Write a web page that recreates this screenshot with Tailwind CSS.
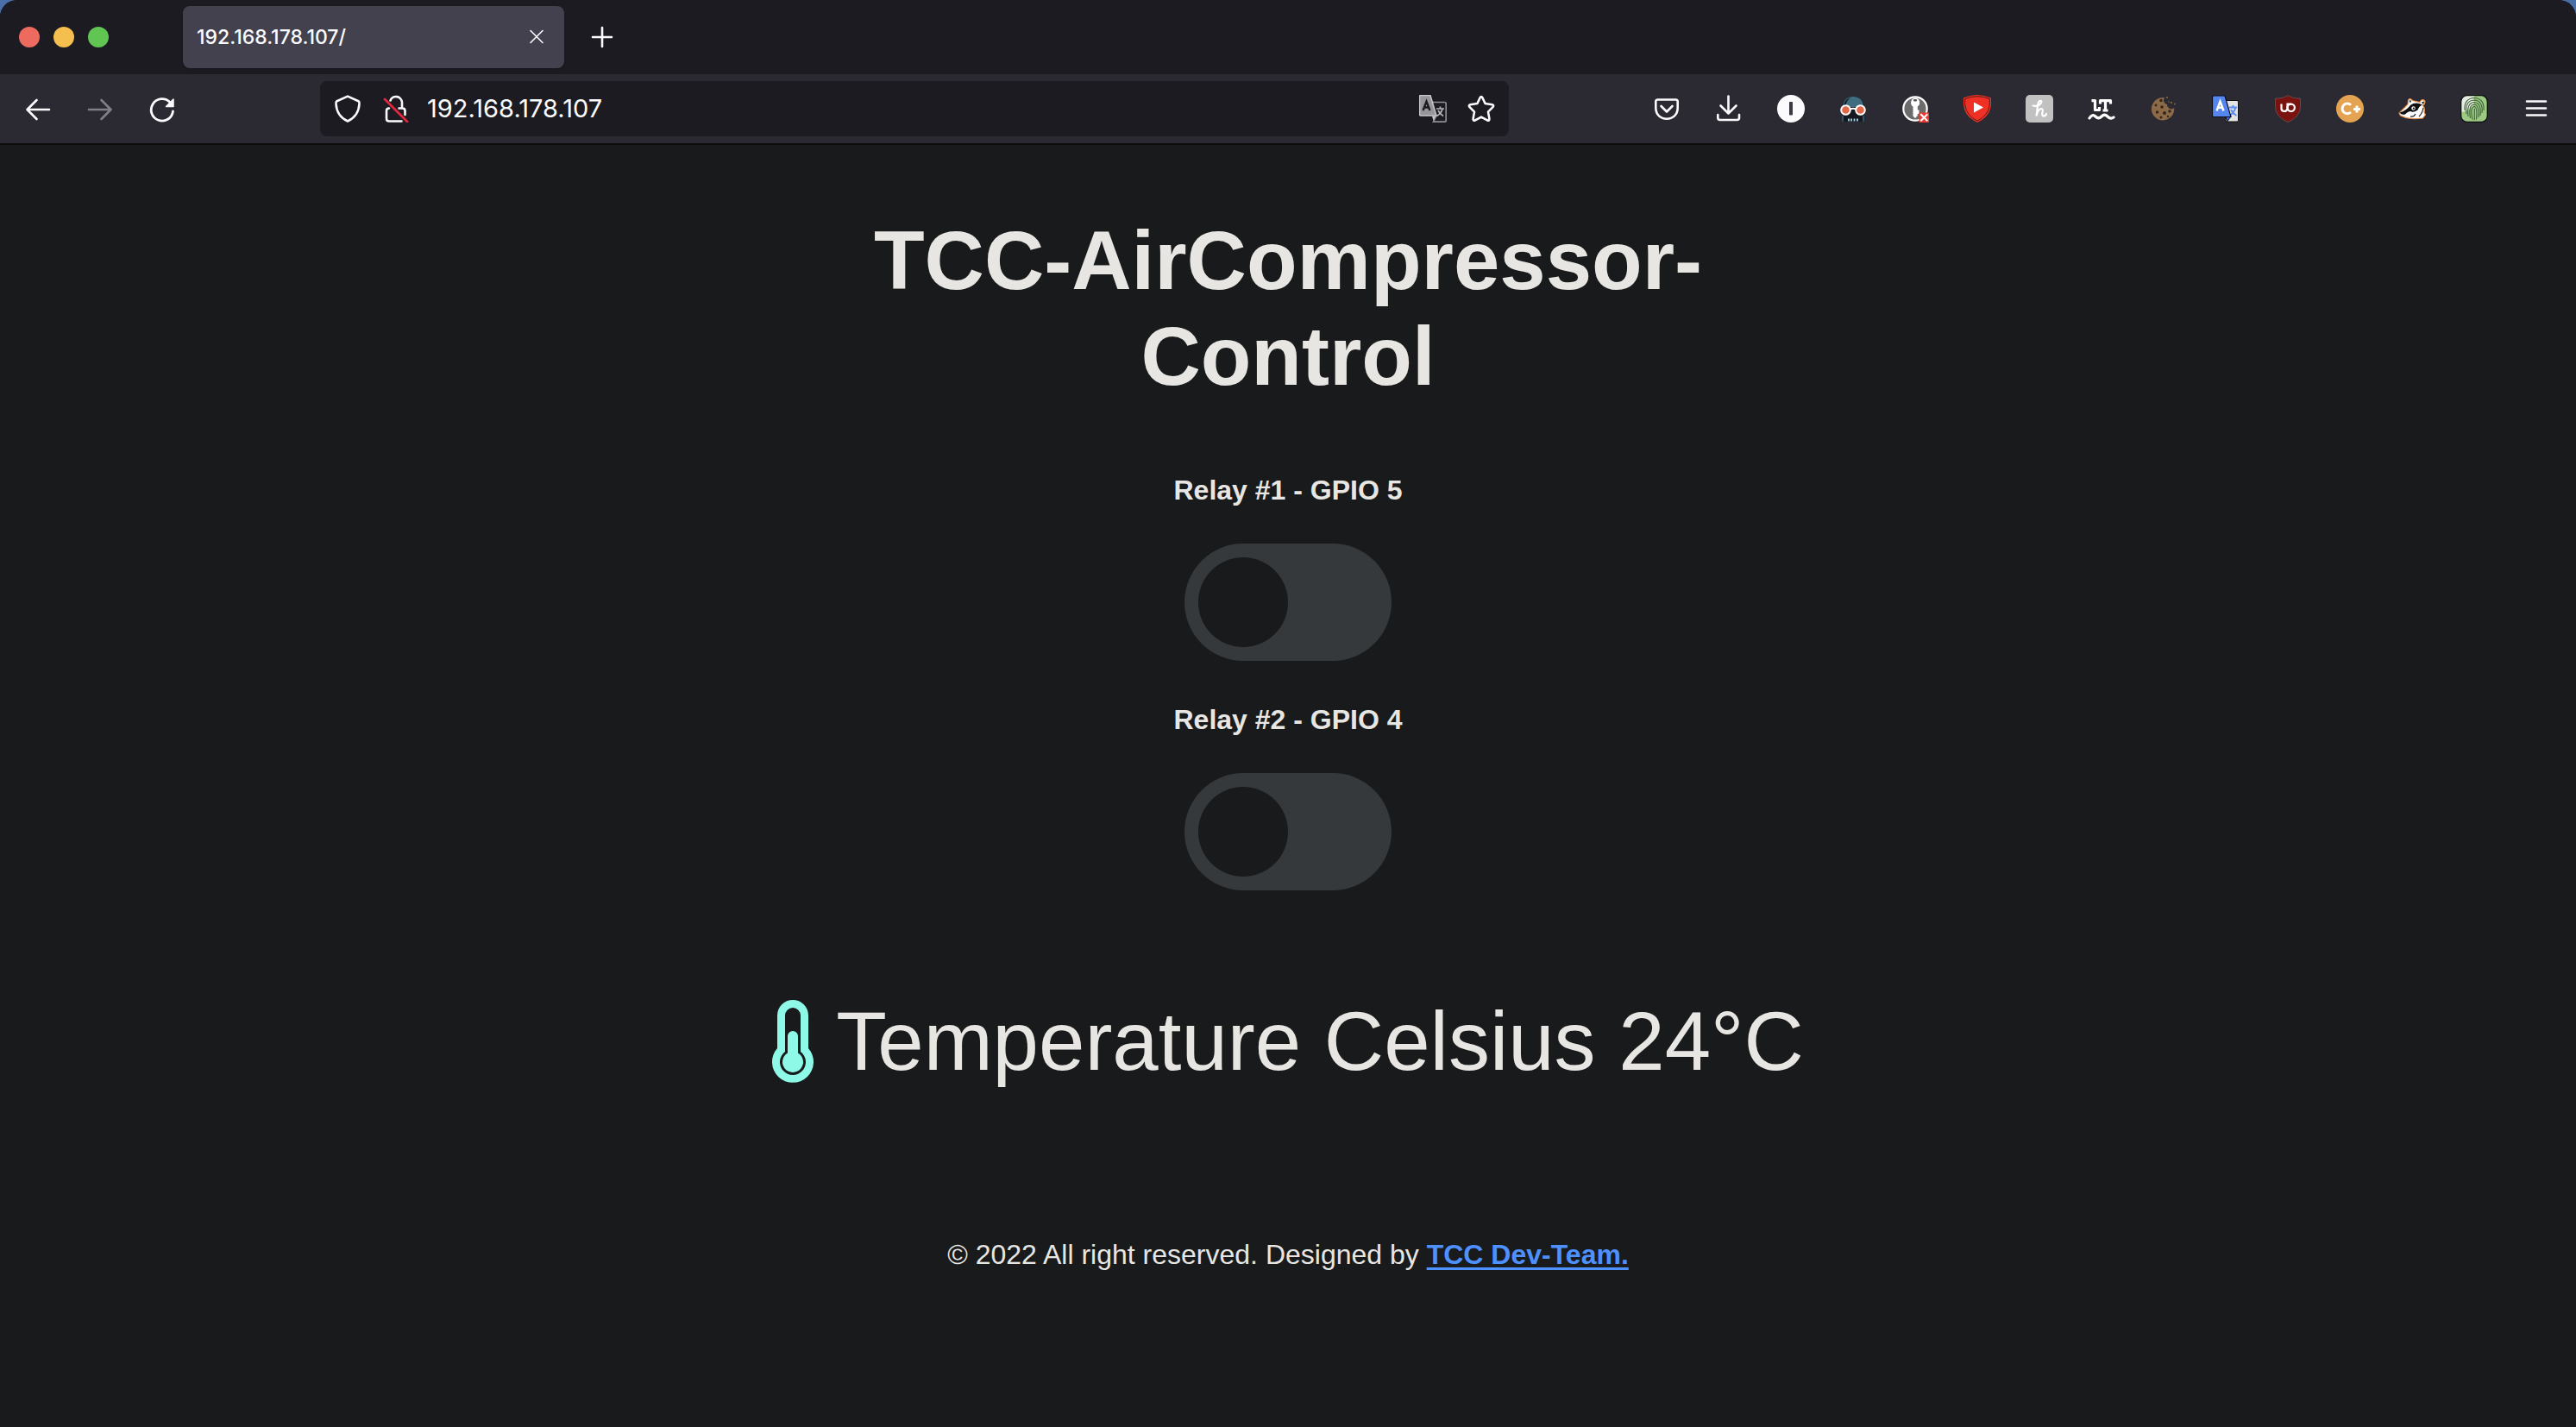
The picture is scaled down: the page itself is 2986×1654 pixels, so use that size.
<!DOCTYPE html>
<html lang="en">
<head>
<meta charset="utf-8">
<title>TCC-AirCompressor-Control</title>
<script src="https://cdn.jsdelivr.net/npm/@tailwindcss/browser@4"></script>
</head>
<body class="min-h-screen bg-[#4a6ea8] font-['Inter',sans-serif] text-[#fbfbfe]">
<div class="flex min-h-screen flex-col overflow-hidden rounded-t-[20px] bg-[#181a1b]">
  <header>
    <div class="flex h-[86px] items-center bg-[#1c1b22]">
      <div class="flex w-[212px] items-center gap-4 pl-[22px]">
        <button aria-label="Close window" class="size-6 rounded-full bg-[#ed6a5e]"></button>
        <button aria-label="Minimise window" class="size-6 rounded-full bg-[#f5bf4f]"></button>
        <button aria-label="Zoom window" class="size-6 rounded-full bg-[#61c554]"></button>
      </div>
      <div class="flex h-[72px] w-[442px] items-center justify-between rounded-lg bg-[#42414d] pr-5 pl-4 shadow">
        <span class="text-[23px] font-medium">192.168.178.107/</span>
        <button aria-label="Close tab"><svg class="size-6" viewBox="0 0 24 24" fill="none" stroke="currentColor" stroke-width="1.600" stroke-linecap="round"><path d="M5 4.500l14 14M19 4.500L5 18.500"/></svg></button>
      </div>
      <button aria-label="New tab" class="ml-7"><svg class="size-8" viewBox="0 0 32 32" fill="none" stroke="currentColor" stroke-width="2.600" stroke-linecap="round"><path d="M16 5v22M5 16h22"/></svg></button>
    </div>
    <nav class="flex h-[82px] items-center border-b-2 border-[#0c0c0d] bg-[#2b2a33] pr-[10px]">
      <div class="flex w-[371px] gap-10 pl-7">
        <button aria-label="Back"><svg class="size-8" viewBox="0 0 32 32" fill="none" stroke="currentColor" stroke-width="2.600" stroke-linecap="round" stroke-linejoin="round"><path d="M29 17H3.500M14.500 6L3.500 17 14.500 28"/></svg></button>
        <button aria-label="Forward" class="text-[#807f86]"><svg class="size-8" viewBox="0 0 32 32" fill="none" stroke="currentColor" stroke-width="2.600" stroke-linecap="round" stroke-linejoin="round"><path d="M3 17h25.500M17.500 6L28.500 17 17.500 28"/></svg></button>
        <button aria-label="Reload"><svg class="size-8" viewBox="0 0 32 32" fill="none" stroke="currentColor" stroke-width="2.800" stroke-linecap="round"><path d="M28.500 19A12.700 12.700 0 1 1 25 8.500"/><path d="M29 5V13.500H20.500z" fill="currentColor" stroke-width="1.500" stroke-linejoin="round"/></svg></button>
      </div>
      <div class="flex h-16 w-[1378px] items-center rounded-lg bg-[#1c1b22] pr-4 pl-4">
        <svg class="size-8" viewBox="0 0 32 32" fill="none" stroke="currentColor" stroke-width="2.600" stroke-linejoin="round"><path d="M16 1.600L28.500 7.200Q29.800 8 29.500 10.500C29 19.500 24.500 26.500 16 30.500 7.500 26.500 3 19.500 2.500 10.500Q2.200 8 3.500 7.200z"/></svg>
        <svg class="ml-6 size-8" viewBox="0 0 32 32" fill="none"><g stroke="currentColor" stroke-width="2.600" stroke-linecap="round"><path d="M9.500 6.500A7 7 0 0 1 23 8.500V15.500M19.500 15.500H23.500Q26.500 15.500 26.500 18.500V23M8 15.500Q5 15.500 5 18.500V27.500Q5 30.500 8 30.500H22.500"/></g><path d="M3 5L29 31" stroke="#e22840" stroke-width="2.800" stroke-linecap="round"/></svg>
        <input aria-label="Address" value="192.168.178.107" class="ml-5 min-w-0 flex-1 bg-transparent text-[29px] outline-none">
        <button aria-label="Translate page"><svg class="size-8" viewBox="0 0 32 32"><path d="M15 8.500H29.500Q31.200 8.500 31.200 10V29.500Q31.200 31.200 29.500 31.200H16.500L20 24" fill="none" stroke="#8f8f94" stroke-width="1.700"/><path d="M20 16H29M24.500 13.500V16M27 16Q26 21 20.500 24.500M22 18Q24 22 28 24.500" stroke="#b5b5b8" stroke-width="1.700" fill="none"/><path d="M2 .5H13L20 24H2Q.500 24 .500 22.500V2Q.500.500 2 .500z" fill="#97979b" stroke="#c8c8ca" stroke-width="1.500"/><path d="M15 24.500H19.500L16.500 30z" fill="#c8c8ca"/><path d="M4.500 18L8.500 7.500 12.500 18M6 14.500H11" fill="none" stroke="#1c1b22" stroke-width="2.400"/></svg></button>
        <button aria-label="Bookmark this page" class="ml-6"><svg class="size-8" viewBox="0 0 32 32" fill="none" stroke="currentColor" stroke-width="2.600" stroke-linejoin="round"><path d="M14.600 3.200Q16 1 17.400 3.200L20.600 10 28.600 11.200Q31.200 12 29.400 14.200L24 19.600 25.400 27.600Q25.600 30.200 23 29.400L16 25.600 9 29.400Q6.400 30.200 6.600 27.600L8 19.600 2.600 14.200Q.8 12 3.400 11.200L11.400 10z"/></svg></button>
      </div>
      <div class="ml-auto flex">
        <button aria-label="Save to Pocket" class="flex w-[72px] justify-center"><svg class="size-8" viewBox="0 0 32 32" fill="none" stroke="currentColor" stroke-width="2.600" stroke-linecap="round" stroke-linejoin="round"><path d="M5.500 5.500H26.500Q28.700 5.500 28.700 7.800V15C28.700 23 23 27.700 16 27.700S3.300 23 3.300 15V7.800Q3.300 5.500 5.500 5.500z"/><path d="M9.500 13L16 19.500 22.500 13"/></svg></button>
        <button aria-label="Downloads" class="flex w-[72px] justify-center"><svg class="size-8" viewBox="0 0 32 32" fill="none" stroke="currentColor" stroke-width="2.600" stroke-linecap="round" stroke-linejoin="round"><path d="M15.500 1.500V21.500M6.500 12.500L15.500 21.500 24.500 12.500M3.300 23V26.500Q3.300 29 5.800 29H25.500Q28 29 28 26.500V23"/></svg></button>
        <button aria-label="Password manager" class="flex w-[72px] justify-center"><svg class="size-8" viewBox="0 0 32 32"><circle cx="16" cy="16" r="16" fill="#fbfbfe"/><rect x="14" y="8" width="4" height="15.500" rx=".8" fill="#3a3944"/></svg></button>
        <button aria-label="Spy mask" class="flex w-[72px] justify-center"><svg class="size-8" viewBox="0 0 32 32"><path d="M3 31V15C3 6 9 2 16 2S29 6 29 15V31z" fill="#15191f"/><path d="M4 14C4 6 9 2 16 2S28 6 28 14z" fill="#3f6d7f"/><path d="M5 12Q6 5 13 3Q8 7 8 12z" fill="#17242d"/><path d="M4 24V31M28 24V31" stroke="#35647a" stroke-width="1.500"/><path d="M11 27.500V30.500M14 27.500V30.500M17.500 27.500V30.500M21 27.500V30.500" stroke="#9fd5e6" stroke-width="1.800"/><g fill="#e2684a" stroke="#fff" stroke-width="2"><circle cx="7.500" cy="17.500" r="5.300"/><circle cx="24.500" cy="17.500" r="5.300"/><path d="M12.500 16.500Q16 15 19.500 16.500" fill="none"/></g></svg></button>
        <button aria-label="Key manager" class="flex w-[72px] justify-center"><svg class="size-8" viewBox="0 0 32 32"><circle cx="16" cy="16" r="13.700" fill="#6c6c6c" stroke="#fff" stroke-width="2.200"/><path d="M16 3.500A5.500 5.500 0 0 1 18.800 13.500V24L16 27 13.500 24.500V13.500A5.500 5.500 0 0 1 16 3.500zM18.500 17.500H20.500V22H18.500z" fill="#fff"/><rect x="14" y="5" width="4" height="2.500" rx="1" fill="#555"/><rect x="20.500" y="20.500" width="11.500" height="11.500" fill="#e83a2e"/><path d="M22.300 22.300L30.300 30.300M30.300 22.300L22.300 30.300" stroke="#fff" stroke-width="2"/></svg></button>
        <button aria-label="Video shield" class="flex w-[72px] justify-center"><svg class="size-8" viewBox="0 0 32 32"><path d="M16 0Q24 0 32 3.500V11Q31 25 16 32 1 25 0 11V3.500Q8 0 16 0z" fill="#ee3124"/><path d="M16 1.700Q24 1.700 30.300 4.700V11Q29.300 23.700 16 30.200 2.700 23.700 1.700 11V4.700Q8 1.700 16 1.700z" fill="none" stroke="#551b1b" stroke-width="1"/><path d="M12 8.500L23 14.500 12 20.500z" fill="#fff"/></svg></button>
        <button aria-label="Coupons" class="flex w-[72px] justify-center"><svg class="size-8" viewBox="0 0 32 32"><rect width="32" height="32" rx="5" fill="#c1c1c1"/><path d="M8.500 12.500Q14 14 17.500 10 19.500 6.500 17 6.800 14.500 7 14 13L12.500 24.500Q14.500 16.500 18 16 20.500 16 19.500 20 18.500 24.500 21 24.500 23 24.500 24 22" fill="none" stroke="#fff" stroke-width="2.200" stroke-linecap="round"/></svg></button>
        <button aria-label="Grammar check" class="flex w-[72px] justify-center"><svg class="size-8" viewBox="0 0 32 32" fill="none" stroke="#fff"><path d="M4.500 6.700H8.500V17.500H13.500V14M14.500 10.500V6.700H26.500V10.500M20.500 6.700V18M17.500 18H23.500" stroke-width="3.200" stroke-linejoin="round"/><path d="M2 27Q5.500 21.500 9 25T16 25 23 25 30 26" stroke-width="3.200" stroke-linecap="round"/></svg></button>
        <button aria-label="Cookies" class="flex w-[72px] justify-center"><svg class="size-8" viewBox="0 0 32 32"><path d="M17 3.200A13.200 13.200 0 1 0 28.200 15 5 5 0 0 1 20 11 5 5 0 0 1 17 3.200z" fill="#8b6a48"/><g fill="#33251a"><circle cx="13" cy="6.500" r="1.700"/><circle cx="7" cy="12" r="1.400"/><circle cx="14" cy="14" r="1.800"/><circle cx="8.500" cy="20" r="1.800"/><circle cx="17" cy="21" r="2"/><circle cx="23" cy="19" r="1.700"/><circle cx="13" cy="26" r="1.500"/><circle cx="21" cy="25" r="1.200"/></g><g fill="#8b6a48"><circle cx="20" cy="3" r="1"/><circle cx="25" cy="9" r="1.100"/><circle cx="29" cy="10.500" r=".9"/><circle cx="22" cy="8" r=".8"/></g></svg></button>
        <button aria-label="Translate" class="flex w-[72px] justify-center"><svg class="size-8" viewBox="0 0 32 32"><path d="M14 6.500H29Q30.500 6.500 30.500 8V29.500Q30.500 31 29 31H16z" fill="#e3e3e4" stroke="#111" stroke-width="1"/><path d="M20 14.500H29M24.500 12V14.500M27.500 14.500Q26 20 20.500 24M22 17Q24 21.500 28.500 24" fill="none" stroke="#5b8def" stroke-width="2"/><path d="M16 25H22L17.500 31z" fill="#3564d8" stroke="#111"/><path d="M2 1H15L22 25.500H2Q.500 25.500.5 24V2.500Q.500 1 2 1z" fill="#5585ee" stroke="#0b0d18" stroke-width="1.200"/><path d="M5.500 18.500L9.500 7.500 13.500 18.500M7 14.800H12" fill="none" stroke="#fff" stroke-width="2.400"/></svg></button>
        <button aria-label="Content blocker" class="flex w-[72px] justify-center"><svg class="size-8" viewBox="0 0 32 32"><path d="M16 .500Q22 4.500 30.500 4V14Q30.500 25 16 31.700 1.500 25 1.500 14V4Q10 4.500 16 .500z" fill="#7a120f" stroke="#6a5557" stroke-width=".8"/><path d="M8.500 10.500V15.500Q8.500 19 12 19 15 19 15.500 15.500V10.500H19.500" fill="none" stroke="#fff" stroke-width="2.200"/><circle cx="19.700" cy="14.800" r="4.200" fill="none" stroke="#fff" stroke-width="2.200"/></svg></button>
        <button aria-label="Cookie consent" class="flex w-[72px] justify-center"><svg class="size-8" viewBox="0 0 32 32"><circle cx="16" cy="16" r="16" fill="#e3a350"/><path d="M17 11.800A5.800 5.800 0 1 0 17 20M20 16.500H28M24 12.500V20.500" fill="none" stroke="#fff" stroke-width="3"/></svg></button>
        <button aria-label="Badger" class="flex w-[72px] justify-center"><svg class="size-8" viewBox="0 0 32 32"><path d="M1 21L11 11 11.500 6Q13.500 3 16.500 6.500L25 8.500Q27 4 30.500 6.500 32 9.500 28.500 12.500 31.500 16 30 20L31.500 23 28.500 27Q21 28 16 27.500 8 27 2.500 24z" fill="#fff" stroke="#df8b45" stroke-width="1.200"/><path d="M1.500 20.500Q9 18.500 14 12 20 7.500 28 11.500 24 13 22.500 17.500 17 21 14.500 19 11 19 8 22.500 3.500 23.500 1.500 20.500zM12.500 6.500L15 6.500 14 9.500zM27 8.500L30 7.500 29 11z" fill="#101010"/><circle cx="17.500" cy="15.500" r="2.200" fill="#fff"/><circle cx="17.800" cy="15.700" r="1.100" fill="#111"/><path d="M14 25Q18 26 20 22M29 15Q28 21 24 25" fill="none" stroke="#222" stroke-width="1.200"/></svg></button>
        <button aria-label="Fingerprint" class="flex w-[72px] justify-center"><svg class="size-8" viewBox="0 0 32 32"><rect x=".7" y=".7" width="30.600" height="30.600" rx="7" fill="#9cca82"/><path d="M16 .7H8Q.7.7.7 8V20Q12 19 16 10z" fill="#e6ebe3"/><rect x=".7" y=".7" width="30.600" height="30.600" rx="7" fill="none" stroke="#0d0f0c" stroke-width="1.300"/><g fill="none" stroke="#3e6137" stroke-width="1.100"><path d="M5 18Q4 4 16 3.500 28 4 27 18M7 22Q5 6.500 16 6 26.500 6.500 25 21M9 25Q7 9 16 8.500 24.500 9 23 24M11.500 27Q9 11.500 16 11 22 11.500 21 26M14 28.500Q11 14 16 13.500 20 14 18.500 28.500M16.300 16V29"/></g></svg></button>
        <button aria-label="Menu" class="flex w-[72px] justify-center"><svg class="size-8" viewBox="0 0 32 32" stroke="currentColor" stroke-width="2.600" stroke-linecap="round"><path d="M5 7.500H27M5 15.500H27M5 23.500H27"/></svg></button>
      </div>
    </nav>
  </header>
  <main class="mx-auto flex w-full max-w-[1200px] flex-col items-center pt-[78px] text-center font-['Liberation_Sans',Arial,sans-serif] text-[32px] text-[#e8e6e3]">
    <h1 class="text-[96px] leading-[111px] font-bold">TCC-AirCompressor-Control</h1>
    <form class="mt-[82px] flex flex-col gap-[50px]">
      <div class="flex flex-col items-center gap-11">
        <label for="relay1" class="leading-9 font-bold">Relay #1 - GPIO 5</label>
        <input id="relay1" type="checkbox" role="switch" class="h-[136px] w-60 appearance-none rounded-full bg-[#35393b] p-4 before:block before:size-[104px] before:rounded-full before:bg-[#181a1b] checked:bg-[#2c6fb5] checked:before:ml-[104px]">
      </div>
      <div class="flex flex-col items-center gap-11">
        <label for="relay2" class="leading-9 font-bold">Relay #2 - GPIO 4</label>
        <input id="relay2" type="checkbox" role="switch" class="h-[136px] w-60 appearance-none rounded-full bg-[#35393b] p-4 before:block before:size-[104px] before:rounded-full before:bg-[#181a1b] checked:bg-[#2c6fb5] checked:before:ml-[104px]">
      </div>
    </form>
    <p class="mt-[120px] flex items-center gap-[26px] text-[96px] leading-[110px] whitespace-nowrap">
      <svg class="h-24 w-12" viewBox="0 0 48 96" fill="#8ff9e8"><path fill-rule="evenodd" d="M24 0A18 18 0 0 1 42 18V56A24 24 0 1 1 6 56V18A18 18 0 0 1 24 0zM24 9A9 9 0 0 0 15 18V60A15 15 0 1 0 33 60V18A9 9 0 0 0 24 9z"/><path d="M24 36A6 6 0 0 1 30 42V61.600A12 12 0 1 1 18 61.600V42A6 6 0 0 1 24 36z"/></svg>
      <span>Temperature Celsius 24°C</span>
    </p>
    <footer class="mt-[174px] leading-9">© 2022 All right reserved. Designed by <a href="#" class="font-bold text-[#4f90ff] underline decoration-[3px] underline-offset-4">TCC Dev-Team.</a></footer>
  </main>
</div>
</body>
</html>
